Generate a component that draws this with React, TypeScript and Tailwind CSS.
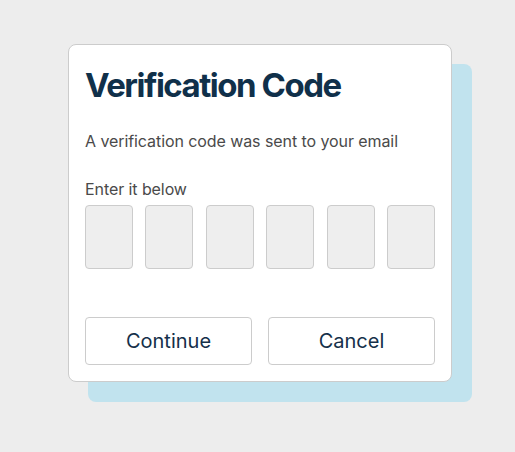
import React from "react";

export default function App() {
  return (
    <div className="min-h-screen w-full bg-[#ededed] pl-[68px] pt-[44px]" style={{ fontFamily: "Inter, 'Noto Sans', sans-serif" }}>
      <div className="relative w-[384px]">
        <div className="absolute left-[20px] top-[20px] h-full w-full rounded-[8px] bg-[#c1e3ee]" />
        <div className="relative flex flex-col rounded-[8px] border border-[#cccccc] bg-white px-4 pb-4 pt-5">
          <h1 className="text-[33px] font-bold leading-[40px] tracking-[-0.045em] text-[#10304a]">Verification Code</h1>
          <p className="mt-6 text-[16px] leading-6 tracking-[-0.005em] text-[#4a4a4a]">A verification code was sent to your email</p>
          <p className="mt-6 text-[16px] leading-6 tracking-[-0.005em] text-[#4a4a4a]">Enter it below</p>
          <div className="mt-1 flex justify-between">
            {[0, 1, 2, 3, 4, 5].map((i) => (
              <div key={i} className="h-[64px] w-[48px] rounded-[4px] border border-[#cccccc] bg-[#eeeeee]" />
            ))}
          </div>
          <div className="mt-12 flex gap-4">
            <button className="h-12 flex-1 rounded-[4px] border border-[#cccccc] bg-white text-[20px] text-[#15304a]">Continue</button>
            <button className="h-12 flex-1 rounded-[4px] border border-[#cccccc] bg-white text-[20px] text-[#15304a]">Cancel</button>
          </div>
        </div>
      </div>
    </div>
  );
}
